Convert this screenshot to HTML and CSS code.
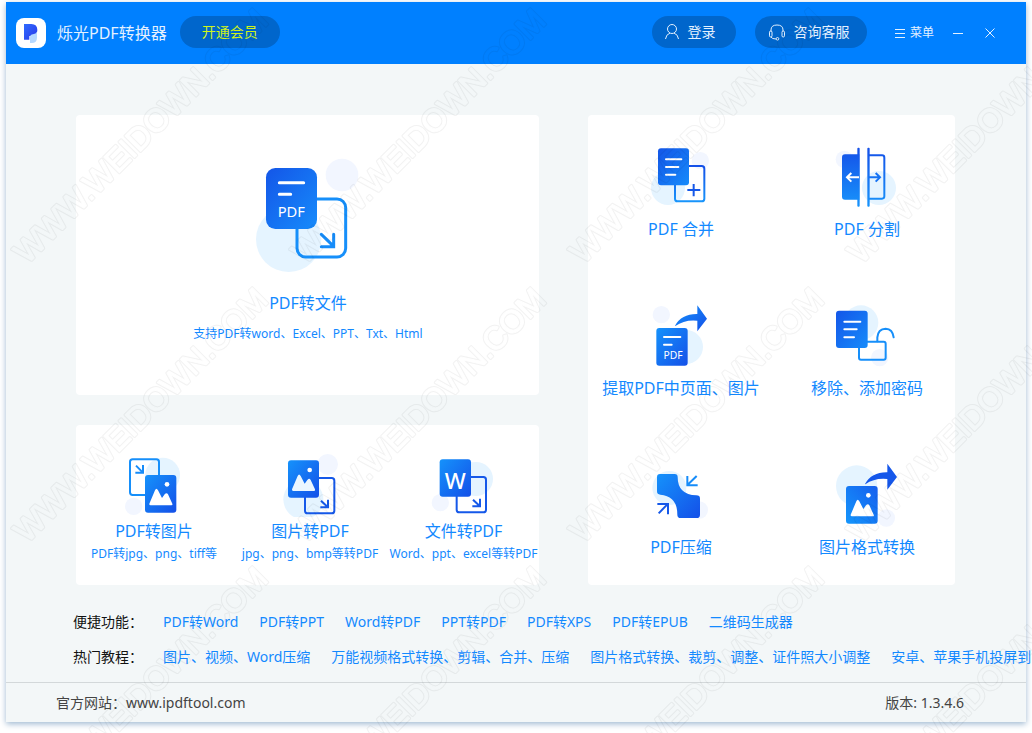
FILE: index.html
```html
<!DOCTYPE html>
<html lang="zh-CN">
<head>
<meta charset="utf-8">
<meta name="viewport" content="width=device-width, initial-scale=1">
<title>烁光PDF转换器</title>
<link rel="stylesheet" href="styles.css">
</head>
<body>
<svg class="defs" width="0" height="0" aria-hidden="true">
  <defs>
    <linearGradient id="deep" x1="0" y1="0" x2="1" y2="1"><stop offset="0" stop-color="#1456e8"/><stop offset="1" stop-color="#168bfb"/></linearGradient>
    <linearGradient id="light" x1="0" y1="0" x2="1" y2="1"><stop offset="0" stop-color="#1592fb"/><stop offset="1" stop-color="#1450e8"/></linearGradient>
    <linearGradient id="down" x1="0" y1="0" x2="0" y2="1"><stop offset="0" stop-color="#1450e8"/><stop offset="1" stop-color="#1894fb"/></linearGradient>
    <linearGradient id="picture" x1="1" y1="0" x2="0" y2="1"><stop offset="0" stop-color="#165fee"/><stop offset="1" stop-color="#1496fc"/></linearGradient>
    <linearGradient id="split" gradientUnits="userSpaceOnUse" x1="0" y1="53" x2="0" y2="230"><stop offset="0" stop-color="#1450e8"/><stop offset="1" stop-color="#1894fb"/></linearGradient>
    <linearGradient id="logo" x1="0" y1="0" x2="1" y2="1"><stop offset="0" stop-color="#2f6bff"/><stop offset="1" stop-color="#2a38e8"/></linearGradient>
  </defs>
</svg>
<div class="window">
  <header class="titlebar">
    <svg class="logo" viewBox="0 0 90 90" aria-hidden="true">
      <rect width="90" height="90" rx="24" fill="#fff"/>
      <path d="M24 18h22q18 0 18 18t-18 18h-6v11H24z" fill="url(#logo)"/>
      <path d="M42 58q0-8 9-9 9-2 12-8v18q0 16-16 16h-5z" fill="#b5d8ff"/>
    </svg>
    <h1 class="app-name">烁光PDF转换器</h1>
    <button class="pill pill-vip">开通会员</button>
    <div class="actions">
      <button class="pill pill-login">
        <svg class="pill-icon" viewBox="0 0 16 18" aria-hidden="true"><circle cx="8" cy="6" r="4.5"/><path d="M1.500 16q.5-4.500 4.500-6M14.500 16q-.5-4.500-4.500-6"/></svg>登录
      </button>
      <button class="pill pill-service">
        <svg class="pill-icon wide" viewBox="0 0 18 18" aria-hidden="true"><path d="M3 8.500V7q0-5 6-5t6 5v1.500"/><rect x="1.500" y="8" width="2.500" height="6" rx="1.200"/><rect x="14" y="8" width="2.500" height="6" rx="1.200"/><path d="M3 14q1 2 5 2"/><circle cx="9.500" cy="15.800" r="1.300"/></svg>咨询客服
      </button>
      <button class="menu">
        <svg class="menu-icon" viewBox="0 0 12 12" aria-hidden="true"><path d="M1 2.500h10M1 6.500h10M1 10.500h10"/></svg>菜单
      </button>
      <button class="win-btn" aria-label="最小化"><svg viewBox="0 0 10 10"><path d="M0 5.500h10"/></svg></button>
      <button class="win-btn close" aria-label="关闭"><svg viewBox="0 0 10 10"><path d="M.5.5l9 9M9.500.5l-9 9"/></svg></button>
    </div>
  </header>

  <main class="panels">
    <div class="left">
      <section class="card hero">
        <button class="tile">
          <svg class="hero-icon" viewBox="48 45 312 354" aria-hidden="true">
            <circle cx="306" cy="105" r="49" fill="#f2f6ff"/>
            <circle cx="146" cy="298" r="98" fill="#e5f4ff"/>
            <rect x="171" y="177" width="146" height="174" rx="26" fill="none" stroke="#168ffa" stroke-width="9"/>
            <rect x="78" y="84" width="153" height="183" rx="28" fill="url(#deep)"/>
            <path d="M118 128h73M118 163h34" class="white-line big"/>
            <text x="154" y="230" class="glyph-text big-pdf">PDF</text>
            <path d="M244 283l37 36M281 283v37h-37" class="arrow hero-arrow"/>
          </svg>
          <span class="title">PDF转文件</span>
          <span class="note">支持PDF转word、Excel、PPT、Txt、Html</span>
        </button>
      </section>
      <section class="card trio">
        <button class="tile">
          <svg class="icon" viewBox="132 39 240 192" aria-hidden="true">
            <circle cx="278" cy="105" r="52" fill="#e5f4ff"/><circle cx="191" cy="199" r="26" fill="#f2f6ff"/>
            <rect x="180" y="58" width="87" height="107" rx="8" fill="none" stroke="#168ffa" stroke-width="6"/>
            <path d="M198 77l20 20M219 75v23h-23" class="arrow"/>
            <rect x="225" y="105" width="94" height="113" rx="9" fill="url(#light)"/>
            <circle cx="291" cy="133" r="7" fill="#fff"/><path d="M238 191l17-40q4-9 9 0l12 23 8-11q6-7 10 0l13 28q2 5-3 5h-62q-5 0-4-5z" fill="#fff"/>
          </svg>
          <span class="title">PDF转图片</span>
          <span class="note">PDF转jpg、png、tiff等</span>
        </button>
        <button class="tile">
          <svg class="icon" viewBox="-93 39 240 192" aria-hidden="true">
            <circle cx="80" cy="73" r="31" fill="#f2f6ff"/><circle cx="7" cy="178" r="60" fill="#e5f4ff"/>
            <rect x="12" y="114" width="88" height="106" rx="8" fill="none" stroke="#1558e9" stroke-width="6"/>
            <path d="M60 182l20 19M81 179v23H58" class="arrow dark"/>
            <rect x="-39" y="61" width="93" height="112" rx="9" fill="url(#light)"/>
            <circle cx="26" cy="90" r="7" fill="#fff"/><path d="M-27 148l17-40q4-9 9 0l12 23 8-11q6-7 10 0l13 28q2 5-3 5h-62q-5 0-4-5z" fill="#eaf6ff"/>
          </svg>
          <span class="title">图片转PDF</span>
          <span class="note">jpg、png、bmp等转PDF</span>
        </button>
        <button class="tile">
          <svg class="icon" viewBox="375 39 240 192" aria-hidden="true">
            <circle cx="531" cy="117" r="51" fill="#e5f4ff"/><circle cx="424" cy="188" r="26" fill="#f2f6ff"/>
            <rect x="473" y="111" width="88" height="106" rx="8" fill="none" stroke="#1558e9" stroke-width="6"/>
            <path d="M522 179l20 19M543 176v23h-23" class="arrow dark"/>
            <rect x="422" y="58" width="94" height="112" rx="9" fill="url(#light)"/>
            <text x="469" y="148" class="glyph-text word">W</text>
          </svg>
          <span class="title">文件转PDF</span>
          <span class="note">Word、ppt、excel等转PDF</span>
        </button>
      </section>
    </div>

    <section class="card tools">
      <button class="tile">
        <svg class="icon" viewBox="153 45 240 192" aria-hidden="true">
          <circle cx="331" cy="92" r="26" fill="#f2f6ff"/><circle cx="234" cy="174" r="51" fill="#e5f4ff"/>
          <rect x="255" y="108" width="88" height="106" rx="8" fill="none" stroke="url(#down)" stroke-width="6"/>
          <rect x="204" y="55" width="93" height="111" rx="9" fill="url(#deep)"/>
          <path d="M228 88h46M228 111h37M228 134h28" class="white-line"/>
          <path d="M311 162v37M292 180h39" class="arrow dark"/>
        </svg>
        <span class="title">PDF 合并</span>
      </button>
      <button class="tile">
        <svg class="icon" viewBox="711 45 240 192" aria-hidden="true">
          <circle cx="763" cy="88" r="26" fill="#f2f6ff"/><circle cx="867" cy="174" r="51" fill="#e5f4ff"/>
          <path d="M808 73h-43q-9 0-9 9v118q0 9 9 9h43z" fill="url(#split)"/>
          <rect x="802" y="53" width="7" height="177" rx="3" fill="url(#split)"/>
          <rect x="832" y="53" width="7" height="177" rx="3" fill="url(#split)"/>
          <path d="M836 76h40q7 0 7 7v116q0 7-7 7h-40" fill="none" stroke="url(#split)" stroke-width="6"/>
          <path d="M807 142h-35M784 129l-13 13 13 13" fill="none" stroke="#fff" stroke-width="6"/>
          <path d="M837 142h33M857 129l13 13-13 13" fill="none" stroke="#1673f4" stroke-width="6"/>
        </svg>
        <span class="title">PDF 分割</span>
      </button>
      <button class="tile">
        <svg class="icon" viewBox="153 42 240 192" aria-hidden="true">
          <circle cx="214" cy="74" r="26" fill="#f2f6ff"/><circle cx="288" cy="171" r="51" fill="#e5f4ff"/>
          <rect x="199" y="114" width="94" height="113" rx="9" fill="url(#light)"/>
          <path d="M222 141h49M222 164h23" class="white-line"/>
          <text x="249" y="207" class="glyph-text small-pdf">PDF</text>
          <path d="M255 107q20-36 67-35V46l29 40-29 38V92q-38-4-66 16z" fill="url(#light)"/>
        </svg>
        <span class="title">提取PDF中页面、图片</span>
      </button>
      <button class="tile">
        <svg class="icon" viewBox="711 42 240 192" aria-hidden="true">
          <circle cx="813" cy="98" r="52" fill="#e5f4ff"/><circle cx="869" cy="203" r="26" fill="#f2f6ff"/>
          <rect x="807" y="155" width="80" height="54" rx="6" fill="none" stroke="#168ffa" stroke-width="6"/>
          <path d="M862 154v-12q2-25 25-26 21 1 24 26" fill="none" stroke="#168ffa" stroke-width="6" stroke-linecap="round"/>
          <rect x="738" y="62" width="95" height="112" rx="9" fill="url(#deep)"/>
          <path d="M763 95h48M763 118h37M763 142h29" class="white-line"/>
        </svg>
        <span class="title">移除、添加密码</span>
      </button>
      <button class="tile">
        <svg class="icon" viewBox="153 39 240 192" aria-hidden="true">
          <circle cx="238" cy="114" r="51" fill="#e5f4ff"/><circle cx="328" cy="180" r="26" fill="#f2f6ff"/>
          <path d="M210 72h44q9 0 9 9 0 53 56 55 11 0 11 10v48q0 10-10 10h-48q-10 0-10-10 0-56-51-60-10 0-10-10V82q0-10 9-10z" fill="url(#light)"/>
          <path d="M320 78l-27 26M292 78v28h31" class="arrow"/>
          <path d="M206 190l26-27M202 162h32v31" class="arrow dark"/>
        </svg>
        <span class="title">PDF压缩</span>
      </button>
      <button class="tile">
        <svg class="icon" viewBox="711 39 240 192" aria-hidden="true">
          <circle cx="800" cy="108" r="62" fill="#e5f4ff"/><circle cx="889" cy="204" r="26" fill="#f2f6ff"/>
          <rect x="768" y="108" width="95" height="113" rx="9" fill="url(#picture)"/>
          <circle cx="835" cy="136" r="7" fill="#fff"/><path d="M782 194l17-40q4-9 9 0l12 23 8-11q6-7 10 0l13 28q2 5-3 5h-62q-5 0-4-5z" fill="#fff"/>
          <path d="M825 102q20-36 67-35V41l29 40-29 38V87q-38-4-66 16z" fill="#1557ea"/>
        </svg>
        <span class="title">图片格式转换</span>
      </button>
    </section>
  </main>

  <nav class="shortcuts">
    <div class="row">
      <span class="row-label">便捷功能：</span>
      <a href="#">PDF转Word</a><a href="#">PDF转PPT</a><a href="#">Word转PDF</a><a href="#">PPT转PDF</a><a href="#">PDF转XPS</a><a href="#">PDF转EPUB</a><a href="#">二维码生成器</a>
    </div>
    <div class="row">
      <span class="row-label">热门教程：</span>
      <a href="#">图片、视频、Word压缩</a><a href="#">万能视频格式转换、剪辑、合并、压缩</a><a href="#">图片格式转换、裁剪、调整、证件照大小调整</a><a href="#">安卓、苹果手机投屏到</a>
    </div>
  </nav>

  <footer class="footer">
    <span>官方网站：<a href="#">www.ipdftool.com</a></span>
    <span>版本: 1.3.4.6</span>
  </footer>
</div>

<svg class="watermark" aria-hidden="true">
  <defs>
    <g id="mark" class="mark">
      <text class="m-outer" transform="translate(27 265) rotate(-45)">WWW.WEIDOWN.COM</text>
      <text class="m-gap" transform="translate(27 265) rotate(-45)">WWW.WEIDOWN.COM</text>
    </g>
    <g id="mark-row"><use href="#mark"/><use href="#mark" x="278"/><use href="#mark" x="556"/><use href="#mark" x="834"/></g>
    <mask id="marks" maskUnits="userSpaceOnUse" x="0" y="0" width="100%" height="100%">
      <use href="#mark-row"/><use href="#mark-row" y="279"/><use href="#mark-row" y="558"/>
    </mask>
  </defs>
  <rect width="100%" height="100%" fill="#000" fill-opacity=".05" mask="url(#marks)"/>
</svg>
</body>
</html>
```

FILE: styles.css
```css
* {
  box-sizing: border-box;
}

body {
  position: relative;
  margin: 0;
  padding: 2px 6px 11px;
  overflow: hidden;
  background: #fff;
  font-family: "Noto Sans", "Noto Sans CJK SC", sans-serif;
  font-size: 14px;
}

button {
  margin: 0;
  padding: 0;
  border: 0;
  background: none;
  color: inherit;
  font: inherit;
  white-space: nowrap;
  cursor: pointer;
}

a {
  color: inherit;
  text-decoration: none;
}

svg {
  display: block;
}

.defs {
  position: absolute;
}

.window {
  background: #f3f7f8;
  box-shadow: 0 2px 6px #9fb9d2;
}

/* Title bar */
.titlebar {
  display: flex;
  align-items: center;
  height: 62px;
  padding: 0 31px 0 10px;
  background: #0080ff;
  color: #e4f1ff;
}

.logo {
  width: 30px;
  height: 30px;
}

.app-name {
  margin: 0 13px 0 11px;
  font-size: 16px;
  font-weight: 400;
  line-height: 24px;
  white-space: nowrap;
}

.pill {
  display: flex;
  align-items: center;
  justify-content: center;
  gap: 7px;
  height: 32px;
  padding-bottom: 1px;
  border-radius: 16px;
  background: #0066cc;
  line-height: 20px;
}

.titlebar .pill {
  margin-bottom: 2px;
}

.pill-vip {
  width: 100px;
  color: #d0f51a;
}

.pill-login {
  width: 84px;
  margin-right: 19px;
  padding-right: 8px;
}

.pill-service {
  width: 112px;
  margin-right: 27px;
  padding-right: 4px;
}

.pill-icon {
  width: 16px;
  height: 18px;
}

.pill-icon.wide {
  width: 18px;
}

.titlebar .actions svg {
  fill: none;
  stroke: #e4f1ff;
}

.actions {
  display: flex;
  align-items: center;
  margin-left: auto;
}

.menu {
  display: flex;
  align-items: center;
  gap: 4px;
  margin-right: 19px;
  font-size: 12px;
  line-height: 18px;
}

.menu-icon {
  width: 12px;
  height: 12px;
}

.win-btn svg {
  width: 10px;
  height: 10px;
}

.close {
  margin-left: 22px;
}

/* Function cards */
.panels {
  display: grid;
  grid-template-columns: 463fr 367fr;
  gap: 49px;
  padding: 51px 71px 0 70px;
}

.left {
  display: flex;
  flex-direction: column;
  gap: 30px;
}

.card {
  border-radius: 4px;
  background: #fff;
  color: #1389ff;
}

.tile {
  display: flex;
  flex-direction: column;
  align-items: center;
}

.title {
  font-size: 16px;
  line-height: 24px;
}

.note {
  font-size: 12px;
  line-height: 20px;
}

.icon {
  width: 80px;
  height: 64px;
}

.hero {
  display: flex;
  justify-content: center;
  padding: 40px 0 51px 1px;
}

.hero-icon {
  width: 104px;
  height: 118px;
}

.hero .title {
  margin: 18px 0 9px;
}

.trio {
  display: grid;
  grid-template-columns: 156fr 156fr 151fr;
  padding: 28px 0 21px;
}

.trio .title {
  margin: 2px 0 1px;
}

.tools {
  display: grid;
  grid-template-columns: 1fr 1fr;
  gap: 63px 26px;
  padding: 30px 8px 26px 13px;
}

.tools .title {
  margin-top: 8px;
}

/* Icon parts */
.white-line {
  fill: none;
  stroke: #fff;
  stroke-width: 6px;
  stroke-linecap: round;
}

.white-line.big {
  stroke-width: 9px;
}

.arrow {
  fill: none;
  stroke: #168cf9;
  stroke-width: 6px;
}

.arrow.dark {
  stroke: #1558e9;
}

.hero-arrow {
  stroke-width: 9px;
  stroke-linecap: round;
}

.glyph-text {
  fill: #fff;
  font-family: "Noto Sans", sans-serif;
  text-anchor: middle;
}

.big-pdf {
  font-size: 44px;
}

.small-pdf {
  font-size: 31px;
}

.word {
  font-size: 67px;
  font-weight: 500;
}

/* Links under the cards */
.shortcuts {
  padding: 19px 0 8px 67px;
}

.row {
  display: flex;
  gap: 21px;
  height: 35px;
  line-height: 35px;
  white-space: nowrap;
  color: #1389ff;
}

.row-label {
  width: 69px;
  color: #111;
}

.footer {
  display: flex;
  justify-content: space-between;
  padding: 0 62px 0 50px;
  border-top: 1px solid #d3d8da;
  color: #444;
  line-height: 39px;
}

/* Repeated outline lettering over the whole page */
.watermark {
  position: absolute;
  inset: 0;
  width: 100%;
  height: 100%;
  pointer-events: none;
}

.mark {
  font-family: "Liberation Sans", sans-serif;
  font-size: 32px;
  stroke-linejoin: round;
}

.m-outer {
  fill: #fff;
  stroke: #fff;
  stroke-width: 3px;
}

.m-gap {
  fill: #000;
  stroke: #000;
  stroke-width: 1px;
}
```
